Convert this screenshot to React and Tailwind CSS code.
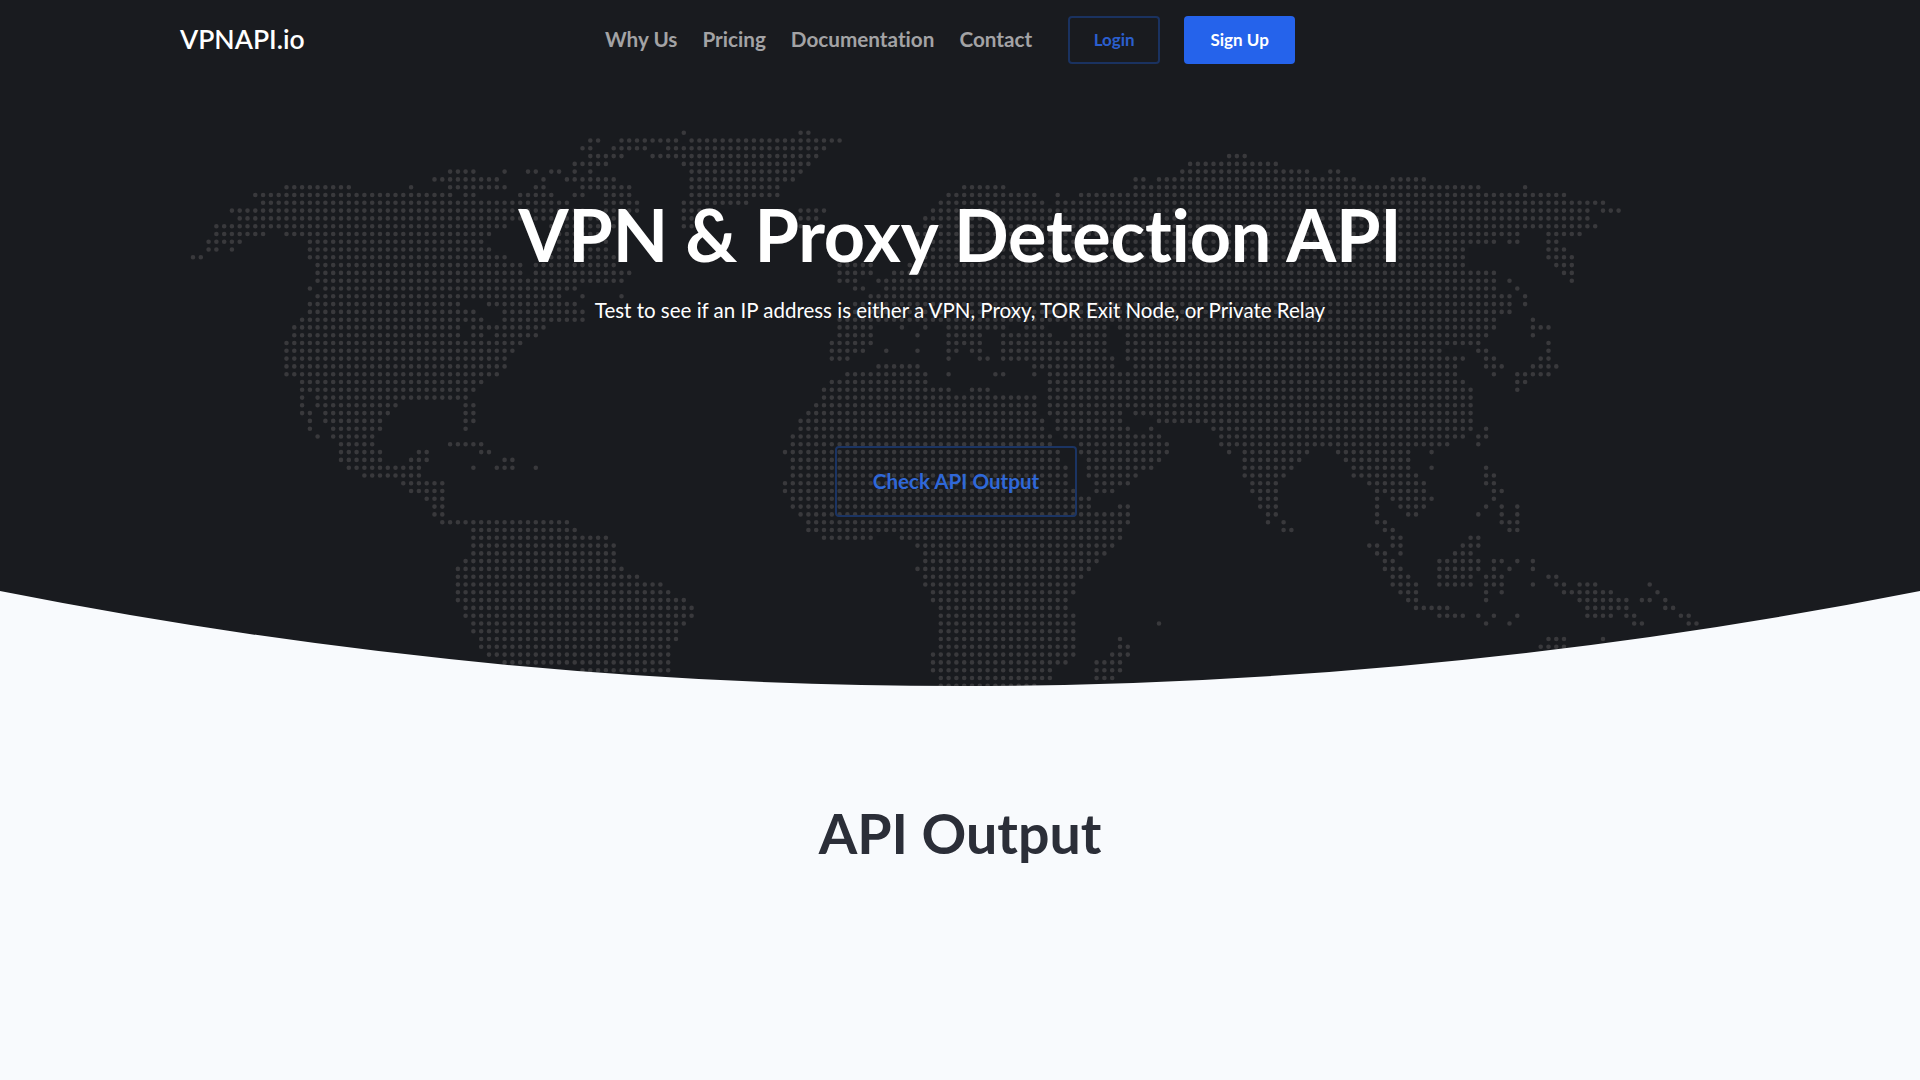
import React from 'react';

// dotted world map, one entry per row of the grid: column runs
const MAP_ROWS = [
  "63 78-79",
  "51-52 55-62 64-83",
  "50-51 54-58 61-81",
  "51-55 59-80 133-135",
  "49-53 63-79 128-139",
  "33-36 40 43-44 46-47 49 51 64-78 127-143 146-147",
  "31-39 45 48-54 64-77 121-122 124-149 154-158",
  "12-20 28 33-40 44-45 50-56 64-75 99-104 121-165 171",
  "8-33 35-36 42-46 49-50 53-56 64-75 97-108 111 114-176",
  "9-48 53-57 63-71 96-109 111-181",
  "5-50 53-57 63-65 78-81 95-179 181-183",
  "6-54 63-64 77-80 94-179",
  "3-40 46-54 63-64 77-78 94-180",
  "3-9 12-38 46-53 93-170 174-178",
  "2-6 15-37 46-53 93-167 169-170 174-175",
  "2-3 5 15-38 46-53 94-163 174-176",
  "0-1 15-40 46-54 94-163 174-177",
  "16-42 44-54 83-87 92-163 175-177",
  "16-42 44-56 83-87 90-167 176-177",
  "16-55 83-85 88-167 169 177",
  "15 17-49 85-86 89-167 170",
  "16-47 50 55 87-169 171",
  "15-34 38-49 85-169 171",
  "15-36 40-50 84-169",
  "14-36 37 40-50 83-167 172",
  "13-34 36-45 83-87 91 94 97-104 107-109 113-117 119-167 172-174",
  "13-34 36-37 39-44 83-87 93 97-101 104-110 113-117 120-166 172",
  "12-42 82-87 97-101 104-117 120-165 174",
  "12-41 82-86 89 93 97-98 100-101 104-117 120-160 165-166 174",
  "12-40 82-84 97 101-102 104-118 120-163 166-167 173-174",
  "12-40 88-93 108-118 121-162 166-168 172-175",
  "12-39 84-94 97 103-104 108 110-162 167 170-174",
  "14-37 82-94 110-163 170-171",
  "14-36 81-97 100-102 110-164 170",
  "14 16-35 81-108 110-164",
  "14 16-26 35-36 80-108 110-164",
  "14-15 17-25 35-36 79-108 110-119 121-164",
  "15 17-24 35-36 78-109 111-119 124-164",
  "15 18-24 35 78-109 111-120 123 131-164 166",
  "16 18-23 77-110 112-124 132-163 165-166",
  "19-23 33-37 77-110 114-125 132-161 165",
  "19-24 29-30 37-38 76-111 114-125 133 135-143 147-156 159",
  "19-24 28-30 40-41 77-111 115-124 135-142 148-156",
  "20-29 36 39-41 44 77-112 115-123 135-141 149-156 159 166",
  "22-29 77-112 115-121 135-140 149-157 166-167",
  "27-32 76-112 116-120 136-139 151-158 166-167",
  "28-32 76-113 116-118 136-139 152-158 167-168",
  "30-32 77-115 137-139 152 154-159 167",
  "31-32 77-115 119-120 137-139 152 155-158 166 168 170",
  "31-32 78-120 138-139 152 156-157 165 168 170",
  "32-48 79-120 138 140 152-153 168-170",
  "36-49 79-119 140-141 153-154 169-170",
  "36-53 81-87 91-119 154-155 164-165",
  "36-54 93-118 151-152 154-155 163-165",
  "36-54 94-117 152-153 155 162-164",
  "35-54 94-116 153-154 160-165 167-168 170 172",
  "34-55 93-115 153-155 160-165 167 169 172",
  "34-54 55-57 94-114 154-156 160-164 166-168 174-175",
  "34-60 94-113 154-157 160-164 166-168 172 175-176 178-180 187",
  "34-61 95-113 155-157 166 168 176-182 188",
  "34-63 95-112 156-157 166 178-184 186-187 189",
  "35-64 96-112 157-161 179-184 189-190",
  "35-64 96-113 160-163 165 167 170 179-182 184-185 191-192",
  "36-63 96-113 124 166 169 185-186 192-193",
  "36-62 96-113",
  "37-62 96-113 119 174-176 181",
  "37-61 96-113 119-120 173-176",
  "38-61 95-113 118-120",
  "40-61 95-112 116-119",
  "50-61 95-110 116-119",
  "96-110 116-118",
  "96-108",
];

const dotsPath = MAP_ROWS.map((row, r) =>
  row.split(" ").map((run) => {
    const [from, to = from] = run.split("-").map(Number);
    let d = "";
    for (let c = from; c <= to; c++) {
      d += `M${(193 + c * 7.79).toFixed(1)} ${(132.7 + r * 7.79).toFixed(1)}h0`;
    }
    return d;
  }).join("")
).join("");

function WorldMap() {
  return (
    <svg className="absolute left-0 top-0" width="1920" height="686" viewBox="0 0 1920 686">
      <path d={dotsPath} stroke="#39393c" strokeWidth="4.6" strokeLinecap="round" fill="none" />
    </svg>
  );
}

function Navbar() {
  return (
    <nav className="relative flex h-20 items-center pl-[180px]">
      <a className="w-[425px] text-[26.5px] font-semibold text-white">VPNAPI.io</a>
      <div className="-mt-px flex items-center gap-[25px] text-[20.7px] font-bold text-[#a3a3a5]">
        <a>Why Us</a>
        <a>Pricing</a>
        <a>Documentation</a>
        <a>Contact</a>
      </div>
      <a className="ml-[36px] flex h-12 w-[92px] items-center justify-center rounded border-2 border-[#1a3260] text-[17px] font-bold text-[#2b5fce]">Login</a>
      <a className="ml-6 flex h-12 w-[111px] items-center justify-center rounded bg-[#2563eb] text-[17px] font-bold text-white">Sign Up</a>
    </nav>
  );
}

export default function App() {
  return (
    <div className="min-h-screen bg-[#f8fafd] font-['Lato',sans-serif] [font-variant-ligatures:none]">
      <section className="relative h-[686px] overflow-hidden bg-[#191b1f]">
        <WorldMap />
        <Navbar />
        <div className="relative flex flex-col items-center">
          <h1 className="mt-[104px] text-[72px] font-bold leading-[100px] tracking-[-0.2px] text-white">VPN &amp; Proxy Detection API</h1>
          <p className="mt-[11px] text-[20.5px] leading-[30px] text-white">Test to see if an IP address is either a VPN, Proxy, TOR Exit Node, or Private Relay</p>
          <a className="mr-[8px] mt-[121px] flex h-[71px] w-[242px] items-center justify-center rounded border-2 border-[#1b3463] text-[20.6px] font-bold text-[#2f68d8]">Check API Output</a>
        </div>
        <svg className="absolute bottom-0 left-0" width="1920" height="95" viewBox="0 0 1920 95">
          <path d="M0 0Q960 190 1920 0V95H0Z" fill="#f8fafd" />
        </svg>
      </section>
      <h2 className="pt-[112px] text-center text-[55.5px] font-bold leading-[70px] text-[#2b2e38]">API Output</h2>
    </div>
  );
}
